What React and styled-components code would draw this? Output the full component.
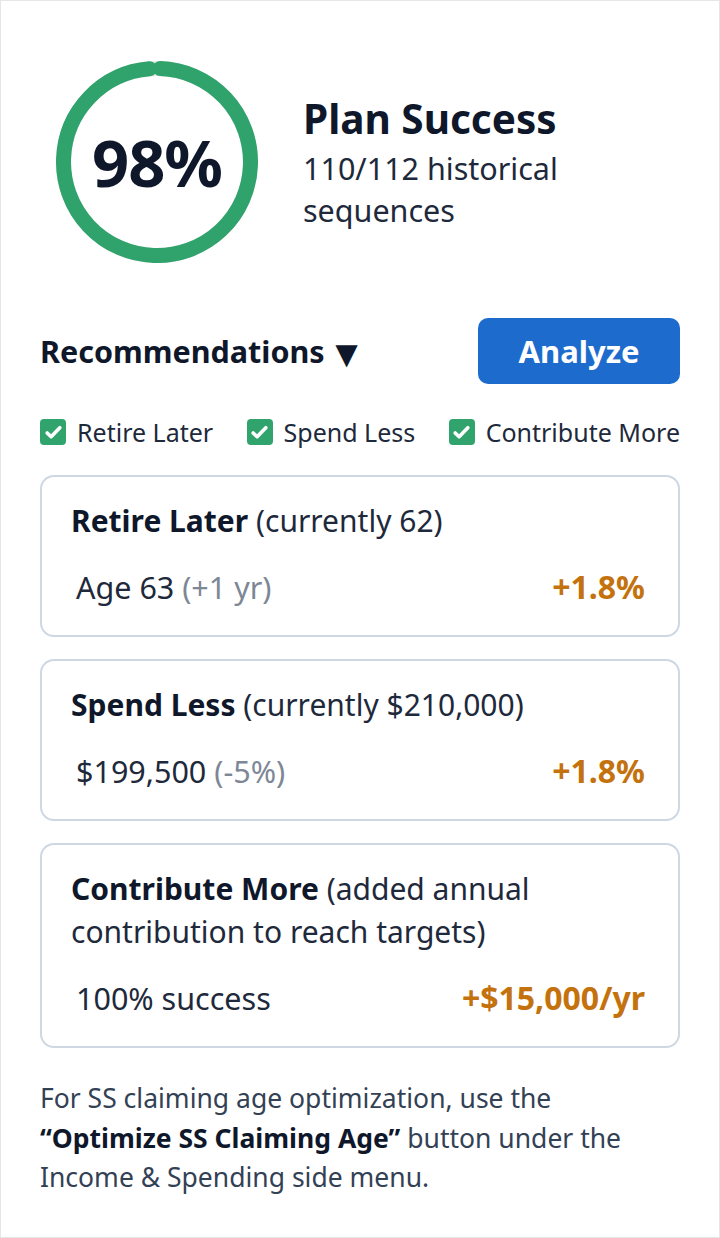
import React from 'react';
import styled, { createGlobalStyle } from 'styled-components';

const GlobalStyle = createGlobalStyle`
    html, body {
        margin: 0;
        padding: 0;
        background: #ffffff;
    }
    body {
        font-family: "Noto Sans", "Open Sans", Arial, sans-serif;
        color: #1e293b;
    }
`;

const Page = styled.main`
    box-sizing: border-box;
    width: 720px;
    height: 1238px;
    border: 1px solid #e6e6e6;
    padding: 60px 39px 0 39px;
    display: flex;
    flex-direction: column;
`;

const Summary = styled.section`
    display: flex;
    align-items: center;
    gap: 45px;
    padding-left: 16px;
`;

const Ring = styled.div`
    position: relative;
    width: 202px;
    height: 202px;
    flex-shrink: 0;
`;

const RingLabel = styled.div`
    position: absolute;
    inset: 0;
    display: flex;
    align-items: center;
    justify-content: center;
    font-size: 65px;
    font-weight: 700;
    color: #0f172a;
    letter-spacing: -1px;
`;

const SummaryText = styled.div`
    display: flex;
    flex-direction: column;
    gap: 2px;
`;

const SummaryTitle = styled.h1`
    margin: 0;
    font-size: 40.5px;
    line-height: 52px;
    font-weight: 700;
    color: #0f172a;
`;

const SummarySub = styled.p`
    margin: 0;
    font-size: 30.5px;
    line-height: 42px;
    color: #1e293b;
    width: 280px;
`;

const RecoHeader = styled.div`
    display: flex;
    align-items: center;
    justify-content: space-between;
    margin-top: 55px;
`;

const RecoTitle = styled.h2`
    margin: 0;
    display: flex;
    align-items: center;
    font-size: 30.5px;
    font-weight: 700;
    color: #0f172a;

    span {
        font-size: 38px;
        line-height: 1;
        margin-left: 3px;
        margin-top: 2px;
    }
`;

const AnalyzeButton = styled.button`
    width: 202px;
    height: 66px;
    border: 0;
    border-radius: 10px;
    background: #1d6bcc;
    color: #ffffff;
    font-family: inherit;
    font-size: 31px;
    font-weight: 700;
    cursor: pointer;
`;

const Filters = styled.div`
    display: flex;
    justify-content: space-between;
    align-items: center;
    margin-top: 33px;
`;

const Filter = styled.label`
    display: flex;
    align-items: center;
    gap: 11px;
    font-size: 25px;
    line-height: 30px;
    color: #1e293b;
`;

const CheckBox = styled.span`
    width: 26px;
    height: 26px;
    border-radius: 4px;
    background: #30a46c;
    display: flex;
    align-items: center;
    justify-content: center;
`;

const Cards = styled.div`
    display: flex;
    flex-direction: column;
    gap: 22px;
    margin-top: 28px;
`;

const Card = styled.article`
    border: 2px solid #cfd7e3;
    border-radius: 14px;
    padding: 22px 33px 27px 29px;
`;

const CardTitle = styled.div`
    font-size: 30px;
    line-height: 43px;
    color: #1e293b;

    b {
        font-weight: 700;
        color: #0f172a;
    }
`;

const CardRow = styled.div`
    display: flex;
    justify-content: space-between;
    align-items: center;
    margin-top: 24px;
    padding-left: 5px;
    font-size: 30.5px;
    line-height: 42px;
    color: #1e293b;
`;

const Muted = styled.span`
    color: #7d8795;
`;

const Gain = styled.span`
    font-size: 32px;
    font-weight: 700;
    color: #c4720e;
`;

const Note = styled.p`
    margin: 31px 0 0 0;
    font-size: 26.5px;
    line-height: 39.5px;
    color: #334155;

    b {
        color: #0f172a;
    }
`;

const Check = () => (
    <svg width="19" height="19" viewBox="0 0 24 24" fill="none">
        <path d="M4 12.5l5 5L20 6" stroke="#ffffff" strokeWidth="4.5" strokeLinecap="round" strokeLinejoin="round" />
    </svg>
);

const SuccessRing = ({ pct }) => {
    const r = 93.5;
    const c = 2 * Math.PI * r;
    return (
        <Ring>
            <svg width="202" height="202" viewBox="0 0 202 202">
                <circle cx="101" cy="101" r={r} fill="none" stroke="#e5e7eb" strokeWidth="15" />
                <circle
                    cx="101" cy="101" r={r} fill="none"
                    stroke="#2fa36b" strokeWidth="15" strokeLinecap="round"
                    strokeDasharray={`${c * pct / 100} ${c}`}
                    transform="rotate(-88 101 101)"
                />
            </svg>
            <RingLabel>{pct}%</RingLabel>
        </Ring>
    );
};

const filters = ['Retire Later', 'Spend Less', 'Contribute More'];

const App = () => {
    return (
        <>
            <GlobalStyle />
            <Page>
                <Summary>
                    <SuccessRing pct={98} />
                    <SummaryText>
                        <SummaryTitle>Plan Success</SummaryTitle>
                        <SummarySub>110/112 historical sequences</SummarySub>
                    </SummaryText>
                </Summary>

                <RecoHeader>
                    <RecoTitle>Recommendations<span>▼</span></RecoTitle>
                    <AnalyzeButton>Analyze</AnalyzeButton>
                </RecoHeader>

                <Filters>
                    {filters.map((f) => (
                        <Filter key={f}>
                            <CheckBox><Check /></CheckBox>
                            {f}
                        </Filter>
                    ))}
                </Filters>

                <Cards>
                    <Card>
                        <CardTitle><b>Retire Later</b> (currently 62)</CardTitle>
                        <CardRow>
                            <span>Age 63 <Muted>(+1 yr)</Muted></span>
                            <Gain>+1.8%</Gain>
                        </CardRow>
                    </Card>
                    <Card>
                        <CardTitle><b>Spend Less</b> (currently $210,000)</CardTitle>
                        <CardRow>
                            <span>$199,500 <Muted>(-5%)</Muted></span>
                            <Gain>+1.8%</Gain>
                        </CardRow>
                    </Card>
                    <Card>
                        <CardTitle><b>Contribute More</b> (added annual contribution to reach targets)</CardTitle>
                        <CardRow>
                            <span>100% success</span>
                            <Gain>+$15,000/yr</Gain>
                        </CardRow>
                    </Card>
                </Cards>

                <Note>
                    For SS claiming age optimization, use the <b>“Optimize SS Claiming Age”</b> button under the Income &amp; Spending side menu.
                </Note>
            </Page>
        </>
    );
};

export default App;
